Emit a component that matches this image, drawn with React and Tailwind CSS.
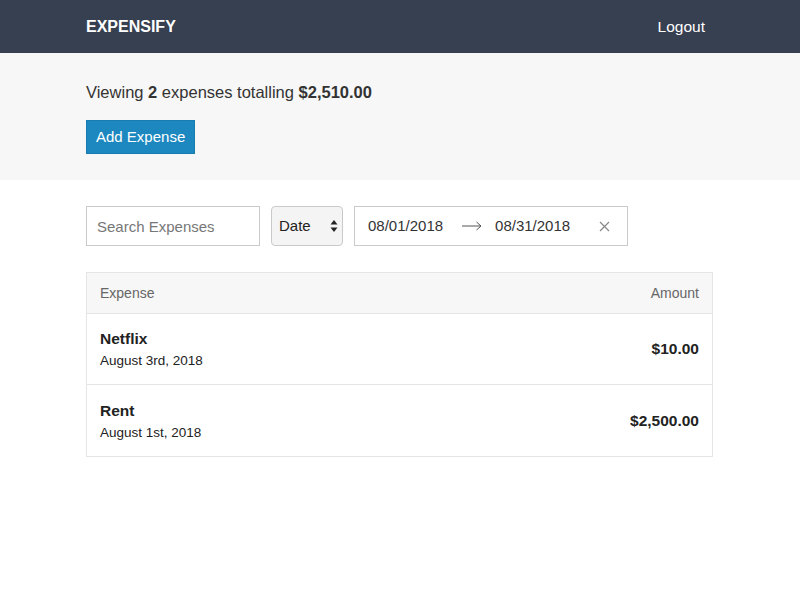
export default function App() {
  const expenses = [
    { id: 1, description: "Netflix", date: "August 3rd, 2018", amount: "$10.00" },
    { id: 2, description: "Rent", date: "August 1st, 2018", amount: "$2,500.00" },
  ];

  return (
    <div className="min-h-[600px] bg-white text-[#333] font-['Liberation_Sans',Arial,sans-serif]">
      {/* Header */}
      <header className="bg-[#364051] h-[53px]">
        <div className="mx-[86px] h-full flex items-center justify-between pr-[9px]">
          <h1 className="text-white text-[16px] font-bold">EXPENSIFY</h1>
          <button className="text-white text-[15.5px]">Logout</button>
        </div>
      </header>

      {/* Summary */}
      <div className="bg-[#f7f7f7] h-[127px] pt-[27px]">
        <div className="mx-[86px] flex flex-col">
          <p className="text-[16.5px] leading-[24px] text-[#333]">
            Viewing <span className="font-bold">2</span> expenses totalling{" "}
            <span className="font-bold">$2,510.00</span>
          </p>
          <button className="mt-[16px] self-start bg-[#1c88bf] border border-[#1a7db0] text-white text-[15px] h-[34px] px-[9px]">
            Add Expense
          </button>
        </div>
      </div>

      <div className="mx-[86px] w-[627px]">
        {/* Filters */}
        <div className="flex items-center gap-[11px] mt-[26px]">
          <input
            type="text"
            placeholder="Search Expenses"
            className="w-[174px] h-[40px] border border-[#cacaca] px-[10px] text-[15px] placeholder:text-[#777] outline-none"
          />
          <div className="w-[72px] h-[40px] border border-[#cacaca] rounded-[4px] bg-[#f4f4f4] flex items-center justify-between pl-[7px] pr-[4px] text-[15px] text-[#222]">
            <span>Date</span>
            <svg width="8" height="14" viewBox="0 0 8 14">
              <path d="M4 1 L7.5 5.5 H0.5 Z" fill="#222" />
              <path d="M4 13 L7.5 8.5 H0.5 Z" fill="#222" />
            </svg>
          </div>
          <div className="w-[274px] h-[40px] border border-[#cacaca] flex items-center text-[15px] text-[#333]">
            <span className="ml-[13px]">08/01/2018</span>
            <svg className="ml-[19px]" width="20" height="10" viewBox="0 0 20 10">
              <path d="M0 5 H19 M14.5 1 L19 5 L14.5 9" stroke="#555" strokeWidth="1" fill="none" />
            </svg>
            <span className="ml-[13px]">08/31/2018</span>
            <svg className="ml-[29px]" width="11" height="11" viewBox="0 0 11 11">
              <path d="M1 1 L10 10 M10 1 L1 10" stroke="#888" strokeWidth="1.2" />
            </svg>
          </div>
        </div>

        {/* Table */}
        <div className="mt-[26px] border border-[#e5e5e5]">
          <div className="h-[41px] bg-[#f7f7f7] border-b border-[#e5e5e5] flex items-center justify-between px-[13px] text-[14px] text-[#666]">
            <span>Expense</span>
            <span>Amount</span>
          </div>
          {expenses.map((expense, i) => (
            <div
              key={expense.id}
              className={`h-[71px] flex items-center justify-between px-[13px] ${
                i < expenses.length - 1 ? "border-b border-[#e5e5e5]" : ""
              }`}
            >
              <div className="flex flex-col pt-[2px]">
                <span className="text-[15.5px] font-bold text-[#222] leading-[20px]">
                  {expense.description}
                </span>
                <span className="text-[13.5px] text-[#222] leading-[20px] mt-[2px]">{expense.date}</span>
              </div>
              <span className="text-[15.5px] font-bold text-[#222]">{expense.amount}</span>
            </div>
          ))}
        </div>
      </div>
    </div>
  );
}
